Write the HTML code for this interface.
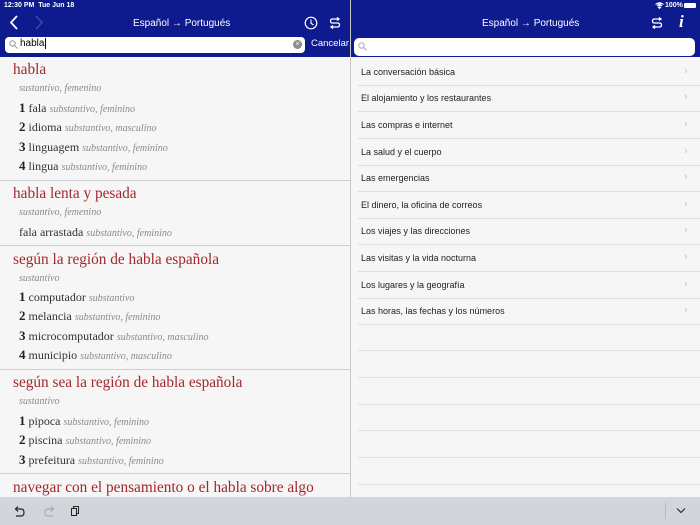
<!DOCTYPE html>
<html><head><meta charset="utf-8"><style>
*{margin:0;padding:0;box-sizing:border-box}
body{width:700px;height:525px;overflow:hidden;background:#f6f6f6;font-family:"Liberation Sans",sans-serif;position:relative}
.hdr{position:absolute;left:0;top:0;width:700px;height:57px;background:#0d1b8e}
.a{position:absolute;white-space:nowrap}
.st{font-size:7px;color:#fff;font-weight:bold}
.ttl{font-size:10px;color:#fff;top:18px}
.hw{font-family:"Liberation Serif",serif;color:#a3282a;font-size:15.3px;left:13px}
.pos{font-family:"Liberation Serif",serif;color:#8a8a8a;font-style:italic;font-size:10px;left:19px}
.tr{font-family:"Liberation Serif",serif;color:#333;font-size:12px;left:19px}
.tr b{font-size:13px;color:#222}
.tr i{color:#8a8a8a;font-size:10px}
.hl{position:absolute;left:0;width:350px;height:1px;background:#cfcfcf}
.row{position:absolute;left:361px;font-size:9px;color:#222}
.rl{position:absolute;left:358px;width:342px;height:1px;background:#e0e0e0}
.chev{position:absolute;left:684px;color:#c8c8c8;font-size:11px}
</style></head><body>
<div class="hdr"></div>
<div class="a st" style="left:4px;top:2px">12:30 PM&nbsp;&nbsp;Tue Jun 18</div>
<div class="a st" style="left:665px;top:2px">100%</div>
<svg class="a" style="left:655px;top:2px" width="9" height="7" viewBox="0 0 9 7"><path d="M0.5 2.5Q4.5-1 8.5 2.5M2 4Q4.5 2 7 4M4.5 6.5L3.3 5.2Q4.5 4.5 5.7 5.2Z" stroke="#fff" stroke-width="1" fill="#fff"/></svg>
<div class="a" style="left:684px;top:3px;width:12px;height:5px;background:#fff;border-radius:1px"></div>
<svg class="a" style="left:9px;top:15px" width="40" height="15" viewBox="0 0 40 15"><path d="M8 1L2 7.5L8 14" stroke="#fff" stroke-width="1.8" fill="none"/><path d="M27 1L33 7.5L27 14" stroke="#3c4aa8" stroke-width="1.6" fill="none"/></svg>
<div class="a ttl" style="left:133px">Español → Portugués</div>
<svg class="a" style="left:304px;top:16px" width="14" height="14" viewBox="0 0 14 14"><circle cx="7" cy="7" r="5.8" stroke="#fff" stroke-width="1.2" fill="none"/><path d="M7 3.5V7.3L9.5 9" stroke="#fff" stroke-width="1.1" fill="none"/></svg>
<svg class="a" style="left:329px;top:17px" width="12" height="12" viewBox="0 0 12 12"><path d="M10 2H3.5Q1.5 2 1.5 4T3.5 6H8.5Q10.5 6 10.5 8T8.5 10H2M8 0.5L10 2L8 3.5M4 8.5L2 10L4 11.5" stroke="#fff" stroke-width="1.3" fill="none"/></svg>
<div class="a" style="left:5px;top:37px;width:300px;height:16px;background:#fff;border-radius:4px"></div>
<svg class="a" style="left:9px;top:40px" width="9" height="9" viewBox="0 0 9 9"><circle cx="3.5" cy="3.5" r="2.7" stroke="#999" fill="none"/><path d="M5.5 5.5L8.5 8.5" stroke="#999"/></svg>
<div class="a" style="left:20px;top:38px;font-size:10px;color:#000">habla<span style="border-left:1px solid #111;margin-left:1px"></span></div>
<div class="a" style="left:293px;top:40px;width:9px;height:9px;border-radius:50%;background:#8e8e8e;color:#fff;font-size:7px;line-height:9px;text-align:center">×</div>
<div class="a" style="left:311px;top:38px;font-size:9.5px;color:#fff">Cancelar</div>
<div class="a ttl" style="left:482px">Español → Portugués</div>
<svg class="a" style="left:651px;top:17px" width="12" height="12" viewBox="0 0 12 12"><path d="M10 2H3.5Q1.5 2 1.5 4T3.5 6H8.5Q10.5 6 10.5 8T8.5 10H2M8 0.5L10 2L8 3.5M4 8.5L2 10L4 11.5" stroke="#fff" stroke-width="1.3" fill="none"/></svg>
<div class="a" style="left:679px;top:12px;font-family:'Liberation Serif',serif;font-style:italic;font-weight:bold;color:#fff;font-size:17px">i</div>
<div class="a" style="left:354px;top:38px;width:341px;height:18px;background:#fff;border-radius:5px"></div>
<svg class="a" style="left:358px;top:42px" width="9" height="9" viewBox="0 0 9 9"><circle cx="3.5" cy="3.5" r="2.7" stroke="#aaa" fill="none"/><path d="M5.5 5.5L8.5 8.5" stroke="#aaa"/></svg>
<div class="a" style="left:350px;top:0;width:1px;height:497px;background:#c8c8c8"></div>

<div class="a hw" style="top:61px">habla</div>
<div class="a pos" style="top:83px">sustantivo, femenino</div>
<div class="a tr" style="top:100px"><b>1</b> fala <i>substantivo, feminino</i></div>
<div class="a tr" style="top:119px"><b>2</b> idioma <i>substantivo, masculino</i></div>
<div class="a tr" style="top:139px"><b>3</b> linguagem <i>substantivo, feminino</i></div>
<div class="a tr" style="top:158px"><b>4</b> lingua <i>substantivo, feminino</i></div>
<div class="hl" style="top:180px"></div>
<div class="a hw" style="top:185px">habla lenta y pesada</div>
<div class="a pos" style="top:207px">sustantivo, femenino</div>
<div class="a tr" style="top:225px">fala arrastada <i>substantivo, feminino</i></div>
<div class="hl" style="top:245px"></div>
<div class="a hw" style="top:251px">según la región de habla española</div>
<div class="a pos" style="top:273px">sustantivo</div>
<div class="a tr" style="top:289px"><b>1</b> computador <i>substantivo</i></div>
<div class="a tr" style="top:308px"><b>2</b> melancia <i>substantivo, feminino</i></div>
<div class="a tr" style="top:328px"><b>3</b> microcomputador <i>substantivo, masculino</i></div>
<div class="a tr" style="top:347px"><b>4</b> municipio <i>substantivo, masculino</i></div>
<div class="hl" style="top:369px"></div>
<div class="a hw" style="top:374px">según sea la región de habla española</div>
<div class="a pos" style="top:396px">sustantivo</div>
<div class="a tr" style="top:413px"><b>1</b> pipoca <i>substantivo, feminino</i></div>
<div class="a tr" style="top:432px"><b>2</b> piscina <i>substantivo, feminino</i></div>
<div class="a tr" style="top:452px"><b>3</b> prefeitura <i>substantivo, feminino</i></div>
<div class="hl" style="top:473px"></div>
<div class="a hw" style="top:479px">navegar con el pensamiento o el habla sobre algo</div>

<div class="row" style="top:67px">La conversación básica</div><div class="chev" style="top:65px">›</div><div class="rl" style="top:85px"></div>
<div class="row" style="top:93px">El alojamiento y los restaurantes</div><div class="chev" style="top:91px">›</div><div class="rl" style="top:111px"></div>
<div class="row" style="top:120px">Las compras e internet</div><div class="chev" style="top:118px">›</div><div class="rl" style="top:138px"></div>
<div class="row" style="top:147px">La salud y el cuerpo</div><div class="chev" style="top:145px">›</div><div class="rl" style="top:165px"></div>
<div class="row" style="top:173px">Las emergencias</div><div class="chev" style="top:171px">›</div><div class="rl" style="top:191px"></div>
<div class="row" style="top:200px">El dinero, la oficina de correos</div><div class="chev" style="top:198px">›</div><div class="rl" style="top:218px"></div>
<div class="row" style="top:226px">Los viajes y las direcciones</div><div class="chev" style="top:224px">›</div><div class="rl" style="top:244px"></div>
<div class="row" style="top:253px">Las visitas y la vida nocturna</div><div class="chev" style="top:251px">›</div><div class="rl" style="top:271px"></div>
<div class="row" style="top:280px">Los lugares y la geografía</div><div class="chev" style="top:278px">›</div><div class="rl" style="top:298px"></div>
<div class="row" style="top:306px">Las horas, las fechas y los números</div><div class="chev" style="top:304px">›</div><div class="rl" style="top:324px"></div>
<div class="rl" style="top:350px"></div><div class="rl" style="top:377px"></div><div class="rl" style="top:404px"></div><div class="rl" style="top:430px"></div><div class="rl" style="top:457px"></div><div class="rl" style="top:484px"></div>

<div class="a" style="left:0;top:497px;width:700px;height:28px;background:#d2d5db"></div>
<svg class="a" style="left:13px;top:505px" width="70" height="12" viewBox="0 0 70 12"><path d="M3 4H8Q11 4 11 7.5T8 11H3M5 1.5L2.5 4L5 6.5" stroke="#222" stroke-width="1.2" fill="none"/><path d="M40 4H35Q32 4 32 7.5T35 11H40M38 1.5L40.5 4L38 6.5" stroke="#aaa" stroke-width="1.2" fill="none"/><rect x="58.5" y="3.5" width="5" height="7" stroke="#222" fill="none"/><path d="M60.5 3.5V1.5H65.5V8.5H63.5" stroke="#222" fill="none"/></svg>
<div class="a" style="left:665px;top:503px;width:1px;height:16px;background:#b5b8be"></div>
<svg class="a" style="left:676px;top:507px" width="10" height="7" viewBox="0 0 10 7"><path d="M1 1.5L5 5.5L9 1.5" stroke="#222" stroke-width="1.1" fill="none"/></svg>
</body></html>
